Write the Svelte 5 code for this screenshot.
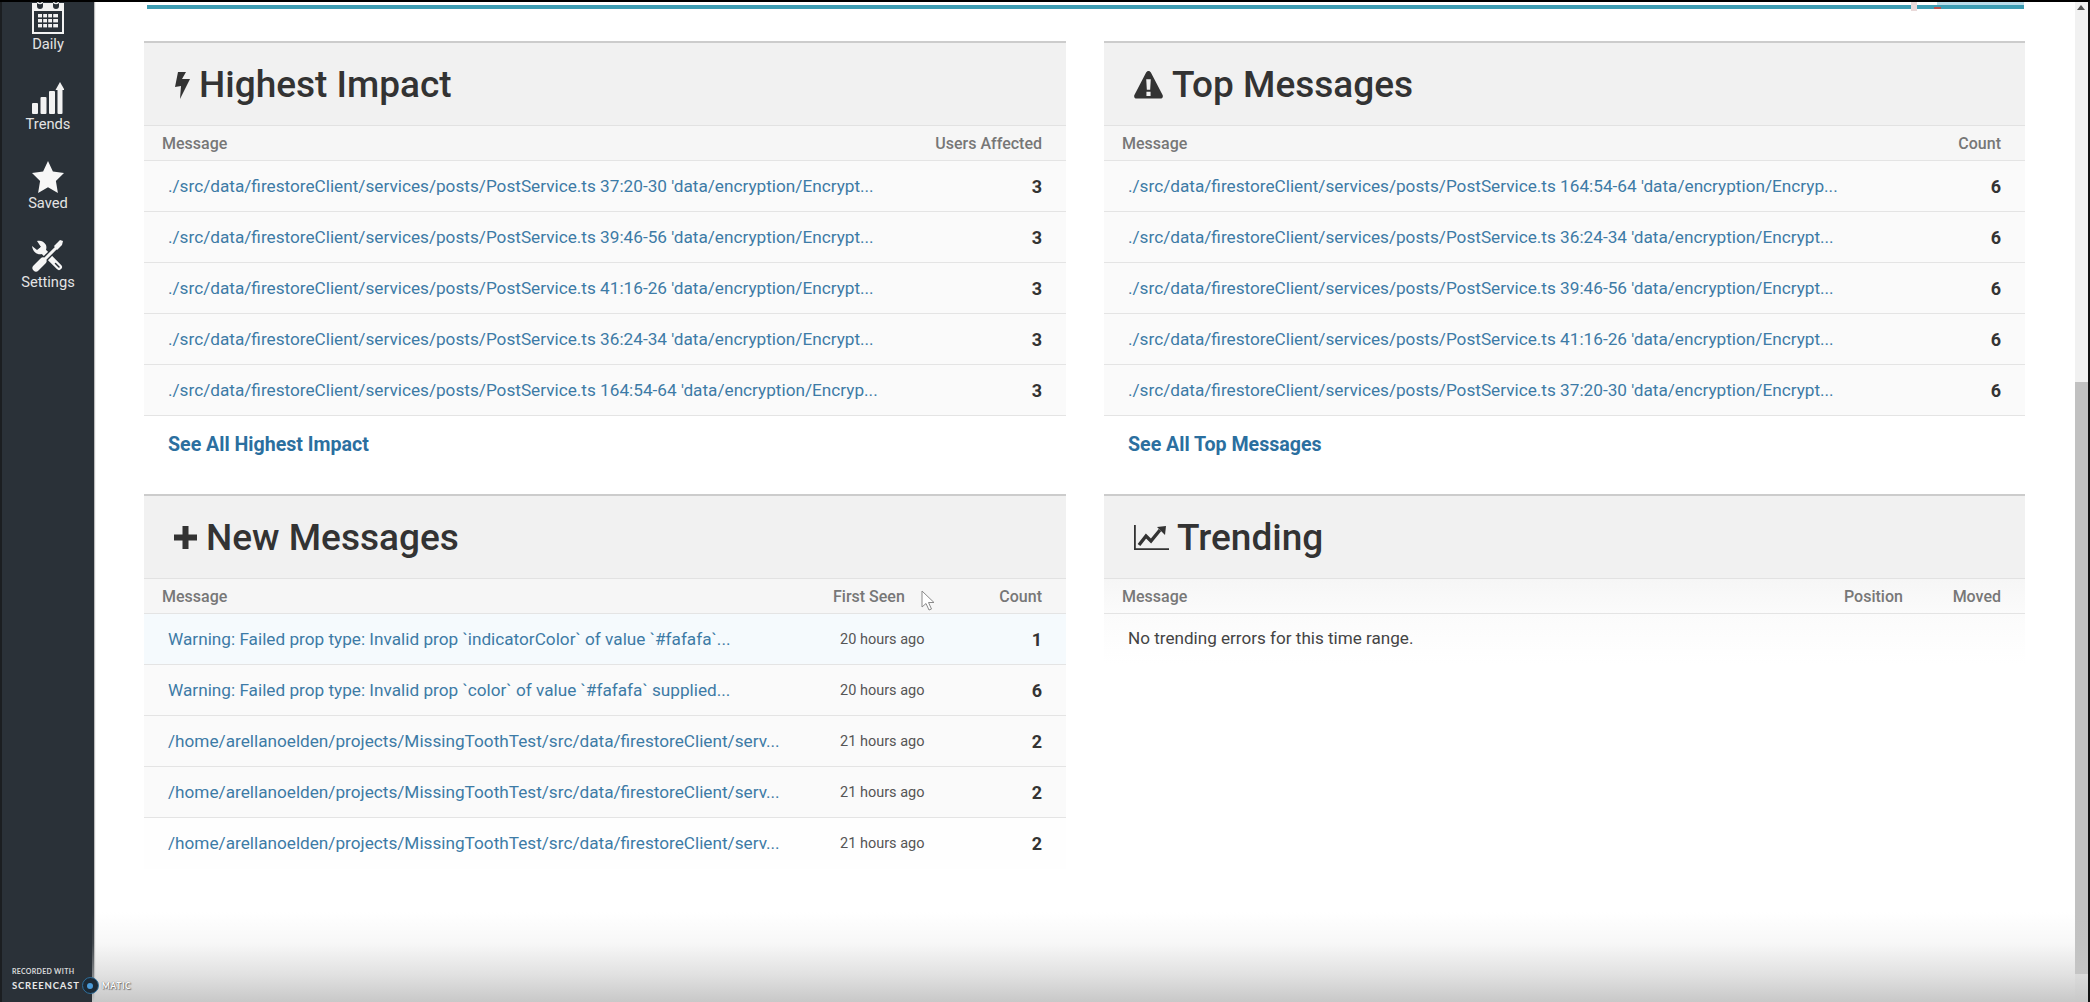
<script lang="ts">
  const nav = ['Daily', 'Trends', 'Saved', 'Settings'];

  const path = './src/data/firestoreClient/services/posts/PostService.ts';
  const home = '/home/arellanoelden/projects/MissingToothTest/src/data/firestoreClient/serv...';

  const panels = [
    {
      icon: 'bolt',
      title: 'Highest Impact',
      kind: 'two',
      cols: ['Message', 'Users Affected'],
      rows: [
        [`${path} 37:20-30 'data/encryption/Encrypt...`, '3'],
        [`${path} 39:46-56 'data/encryption/Encrypt...`, '3'],
        [`${path} 41:16-26 'data/encryption/Encrypt...`, '3'],
        [`${path} 36:24-34 'data/encryption/Encrypt...`, '3'],
        [`${path} 164:54-64 'data/encryption/Encryp...`, '3']
      ],
      more: 'See All Highest Impact'
    },
    {
      icon: 'warn',
      title: 'Top Messages',
      kind: 'two',
      cols: ['Message', 'Count'],
      rows: [
        [`${path} 164:54-64 'data/encryption/Encryp...`, '6'],
        [`${path} 36:24-34 'data/encryption/Encrypt...`, '6'],
        [`${path} 39:46-56 'data/encryption/Encrypt...`, '6'],
        [`${path} 41:16-26 'data/encryption/Encrypt...`, '6'],
        [`${path} 37:20-30 'data/encryption/Encrypt...`, '6']
      ],
      more: 'See All Top Messages'
    },
    {
      icon: 'plus',
      title: 'New Messages',
      kind: 'recent',
      cols: ['Message', 'First Seen', 'Count'],
      rows: [
        ['Warning: Failed prop type: Invalid prop `indicatorColor` of value `#fafafa`...', '20 hours ago', '1'],
        ['Warning: Failed prop type: Invalid prop `color` of value `#fafafa` supplied...', '20 hours ago', '6'],
        [home, '21 hours ago', '2'],
        [home, '21 hours ago', '2'],
        [home, '21 hours ago', '2']
      ]
    },
    {
      icon: 'chart',
      title: 'Trending',
      kind: 'trend',
      cols: ['Message', 'Position', 'Moved'],
      rows: [],
      empty: 'No trending errors for this time range.'
    }
  ];
</script>

<div class="screen">
  <aside class="sidebar">
    {#each nav as item}
      <div class="nav-item">
        {#if item === 'Daily'}
          <svg viewBox="0 0 32 36" width="32" height="36" aria-hidden="true">
            <path fill="#f2f2f2" d="M0 5h5v3a3 3 0 0 0 6 0V5h10v3a3 3 0 0 0 6 0V5h5v31H0z" />
            <rect x="2" y="13" width="28" height="21" fill="#2a3138" />
            <g fill="#f2f2f2">
              <rect x="6" y="16" width="20" height="3.4" />
              <rect x="6" y="21" width="20" height="3.4" />
              <rect x="6" y="26" width="20" height="3.4" />
            </g>
            <g fill="#2a3138">
              <rect x="10" y="16" width="1.2" height="14" />
              <rect x="15" y="16" width="1.2" height="14" />
              <rect x="20" y="16" width="1.2" height="14" />
            </g>
            <circle cx="8" cy="3" r="2.6" fill="none" stroke="#f2f2f2" stroke-width="1.4" />
            <circle cx="24" cy="3" r="2.6" fill="none" stroke="#f2f2f2" stroke-width="1.4" />
          </svg>
        {:else if item === 'Trends'}
          <svg viewBox="0 0 32 32" width="32" height="32" aria-hidden="true">
            <g fill="#f2f2f2">
              <rect x="0" y="21" width="6" height="11" rx="1" />
              <rect x="8.5" y="15" width="6" height="17" rx="1" />
              <rect x="17" y="9" width="6" height="23" rx="1" />
              <rect x="25.5" y="6" width="5" height="26" rx="1" />
              <path d="M28 0l4.5 8h-9z" />
            </g>
          </svg>
        {:else if item === 'Saved'}
          <svg viewBox="0 0 32 32" width="32" height="32" aria-hidden="true">
            <path fill="#f7f7f7" d="M16 0l4.900 10.400L32 12l-8.100 8 2 12L16 26.300 6.100 32l2-12L0 12l11.100-1.600z" />
          </svg>
        {:else}
          <svg viewBox="0 0 32 32" width="32" height="32" aria-hidden="true">
            <g stroke-linecap="round" fill="none">
              <path d="M10 10L27 27" stroke="#f5f5f5" stroke-width="6" />
              <path d="M23.500 23.500L27 27" stroke="#2a3138" stroke-width="1.500" />
              <path d="M17 15L13 19" stroke="#2a3138" stroke-width="6" />
              <path d="M4 28L11 21" stroke="#f5f5f5" stroke-width="7" />
              <path d="M11 21L24 8" stroke="#f5f5f5" stroke-width="3" />
            </g>
            <path fill="#f5f5f5" d="M22 6L28 0l3 1-1 4-5 5zM0 6l5 4 4-3-4-6C8 0 12 1 14 5c1 3 0 5-1 7l-3 2C6 15 1 13 0 6z" />
          </svg>
        {/if}
        <span>{item}</span>
      </div>
    {/each}
  </aside>

  <main class="content">
    <div class="strip">
      <div class="strip-end">
        <i class="notch"></i>
        <i class="peak"></i>
      </div>
    </div>

    <div class="grid">
      {#each panels as panel}
        <section class="panel">
          <h2>
            {#if panel.icon === 'bolt'}
              <svg class="bolt" viewBox="0 0 15 28" width="15" height="28" aria-hidden="true">
                <path fill="#333" d="M3 1h8L7 8h8L5 28l1-13-6 1z" />
              </svg>
            {:else if panel.icon === 'warn'}
              <svg class="warn" viewBox="0 0 28 28" width="29" height="29" aria-hidden="true">
                <path fill="#333" fill-rule="evenodd" d="M14 1c1 0 1.800.6 2.300 1.500l11.300 21.600c.8 1.700-.3 3.400-2.100 3.400H2.500C.7 27.500-.4 25.800.4 24.100L11.700 2.500C12.200 1.600 13 1 14 1zM11.800 9l.6 10h3.200l.6-10zM12 21v4h4v-4z" />
              </svg>
            {:else if panel.icon === 'plus'}
              <svg class="plus" viewBox="0 0 23 23" width="23" height="23" aria-hidden="true">
                <path fill="#333" d="M8.500 0h6v8.500H23v6h-8.500V23h-6v-8.500H0v-6h8.500z" />
              </svg>
            {:else}
              <svg class="chart" viewBox="0 0 35 25" width="35" height="25" aria-hidden="true">
                <path fill="#333" d="M0 0h1.800v23.200H35V25H0z" />
                <path fill="none" stroke="#333" stroke-width="3.400" d="M5 20l7-9 5 5 9-11" />
                <path fill="#333" d="M23 2l9-1-1 9z" />
              </svg>
            {/if}
            {panel.title}
          </h2>

          <div class="row head {panel.kind}">
            {#each panel.cols as col, i}
              <span class:end={i === panel.cols.length - 1}>{col}</span>
            {/each}
          </div>

          {#each panel.rows as row, r}
            <div class="row body {panel.kind}" class:fresh={panel.kind === 'recent' && r === 0}>
              <a href="#top" class="msg">{row[0]}</a>
              {#if row.length === 3}
                <span class="ago">{row[1]}</span>
              {/if}
              <b class="num">{row[row.length - 1]}</b>
            </div>
          {/each}

          {#if panel.empty}
            <p class="empty">{panel.empty}</p>
          {/if}

          {#if panel.more}
            <a href="#top" class="more">{panel.more}</a>
          {/if}
        </section>
      {/each}
    </div>
  </main>

  <div class="scrollbar">
    <i class="arrow"></i>
    <div class="thumb"></div>
  </div>

  <div class="fade"></div>

  <svg class="cursor" viewBox="0 0 14 21" width="14" height="21" aria-hidden="true">
    <path fill="#fff" stroke="#8a8a8a" d="M1 1v16l4-3.500 3 6.500 2.500-1-3-6.500H13z" />
  </svg>

  <div class="mark">
    <small>RECORDED WITH</small>
    <div class="mark-line">
      <strong>SCREENCAST</strong>
      <i class="ring"><i></i></i>
      <em>MATIC</em>
    </div>
  </div>
</div>

<style>
  :global(body) {
    margin: 0;
    background: #fff;
  }

  .screen {
    position: relative;
    display: flex;
    width: 2090px;
    height: 1002px;
    overflow: hidden;
    background: #fff;
    border-top: 2px solid #000;
    border-right: 2px solid #111;
    box-sizing: border-box;
    font-family: Roboto, 'Liberation Sans', sans-serif;
    color: #333;
  }

  .sidebar {
    flex: 0 0 92px;
    margin-top: -6px;
    padding-top: 0;
    background: #2a3138;
    border-left: 2px solid #1b1e21;
    box-shadow: 1px 0 1px #bbb;
    z-index: 2;
  }

  .nav-item {
    display: flex;
    flex-direction: column;
    align-items: center;
    height: 79px;
    box-sizing: border-box;
    color: #e4e4e4;
    font-size: 14.7px;
    line-height: 16px;
  }

  .nav-item:first-child {
    height: 78px;
    padding-top: 2px;
  }

  .nav-item:nth-child(n + 2) {
    padding-top: 8px;
  }

  .nav-item span {
    margin-top: 2px;
  }

  .nav-item:first-child span {
    margin-top: 2px;
  }

  .content {
    flex: 1;
    min-width: 0;
    padding: 3px 50px 0;
  }

  .strip {
    display: flex;
    justify-content: flex-end;
    height: 4px;
    margin: 0 1px 0 3px;
    background: #3d9db3;
  }

  .strip-end {
    position: relative;
    width: 87px;
    height: 3px;
    margin-top: -3px;
    background: #b9dcea;
  }

  .notch {
    position: absolute;
    left: -26px;
    top: 0;
    width: 6px;
    height: 9px;
    background: #e9d9d9;
  }

  .peak {
    position: absolute;
    left: -3px;
    top: 5px;
    width: 7px;
    height: 2px;
    background: #c0504d;
  }

  .grid {
    display: grid;
    grid-template-columns: 922px 921px;
    column-gap: 38px;
    margin-top: 32px;
  }

  .panel {
    display: flex;
    flex-direction: column;
    height: 453px;
  }

  h2 {
    display: flex;
    align-items: center;
    height: 82px;
    margin: 0;
    padding-left: 30px;
    background: #f1f1f1;
    border-top: 2px solid #ccc;
    border-bottom: 1px solid #e2e2e2;
    font-size: 37px;
    font-weight: 500;
    color: #333;
  }

  h2 svg {
    flex: none;
    margin-right: 9px;
  }

  h2 .bolt {
    margin: 2px 9px 0 1px;
  }

  h2 .chart {
    margin-right: 8px;
  }

  .row {
    display: grid;
    align-items: center;
    padding: 0 24px 0 18px;
    border-bottom: 1px solid #e4e4e4;
  }

  .row.two {
    grid-template-columns: 1fr auto;
  }

  .row.recent {
    grid-template-columns: 1fr 99px 110px;
  }

  .row.trend {
    grid-template-columns: 1fr 108px 49px;
  }

  .head {
    height: 34px;
    background: #f6f6f6;
    font-size: 16px;
    font-weight: 500;
    color: #777;
  }

  .head.trend {
    background: linear-gradient(#f6f6f6, #fbfbfb);
  }

  .end {
    text-align: right;
  }

  .body {
    height: 50px;
    background: #fafafa;
  }

  .body.recent:last-of-type {
    background: #fefefe;
    border-bottom-color: transparent;
  }

  .body.fresh {
    background: #f5fafd;
  }

  .msg {
    padding-left: 6px;
    font-size: 17.2px;
    color: #3d7ba6;
    text-decoration: none;
    white-space: nowrap;
  }

  .ago {
    padding-left: 7px;
    font-size: 14.5px;
    color: #555;
    white-space: nowrap;
  }

  .num {
    text-align: right;
    font-size: 18px;
    font-weight: 700;
    color: #333;
  }

  .empty {
    margin: 0;
    padding: 14px 0 16px 24px;
    font-size: 17.1px;
    color: #444;
    background: linear-gradient(#fbfbfb, #fff);
  }

  .more {
    margin: 17px 0 0 24px;
    font-size: 19.6px;
    font-weight: 700;
    color: #2b6f9f;
    text-decoration: none;
  }

  .scrollbar {
    position: relative;
    flex: 0 0 13px;
    background: #f1f1f1;
  }

  .arrow {
    position: absolute;
    top: 3px;
    left: 2px;
    border: 4.5px solid transparent;
    border-top: 0;
    border-bottom: 5px solid #555;
  }

  .thumb {
    position: absolute;
    top: 380px;
    left: 0;
    right: 0;
    height: 592px;
    background: #c1c1c1;
  }

  .fade {
    position: absolute;
    left: 92px;
    right: 0;
    bottom: 0;
    height: 90px;
    background: linear-gradient(rgba(200, 200, 200, 0), rgba(200, 200, 200, 0.14) 35%, rgba(200, 200, 200, 0.55) 70%, rgba(200, 200, 200, 1));
    z-index: 3;
    pointer-events: none;
  }

  .cursor {
    position: absolute;
    left: 921px;
    top: 588px;
    z-index: 4;
  }

  .mark {
    position: absolute;
    left: 12px;
    bottom: 8px;
    z-index: 5;
    font-family: Lato, 'Open Sans', sans-serif;
    color: #d8d8d8;
  }

  .mark small {
    display: block;
    font-size: 7px;
    font-weight: 700;
    letter-spacing: 0.3px;
    line-height: 9px;
  }

  .mark-line {
    display: flex;
    align-items: center;
    margin-top: 1px;
  }

  .mark strong {
    font-size: 9.5px;
    letter-spacing: 0.8px;
    color: #e8e8e8;
  }

  .ring {
    display: flex;
    align-items: center;
    justify-content: center;
    width: 15px;
    height: 15px;
    margin: 0 3px 0 2px;
    border: 1.5px solid #2f6f9c;
    border-radius: 50%;
    background: #1c2a36;
  }

  .ring i {
    width: 6px;
    height: 6px;
    border-radius: 50%;
    background: #4a9ad8;
  }

  .mark em {
    font-size: 8.5px;
    font-style: normal;
    font-weight: 700;
    letter-spacing: 0.6px;
    color: #fff;
    text-shadow: 0 0 1px #555, 1px 1px 1px #777;
  }
</style>
